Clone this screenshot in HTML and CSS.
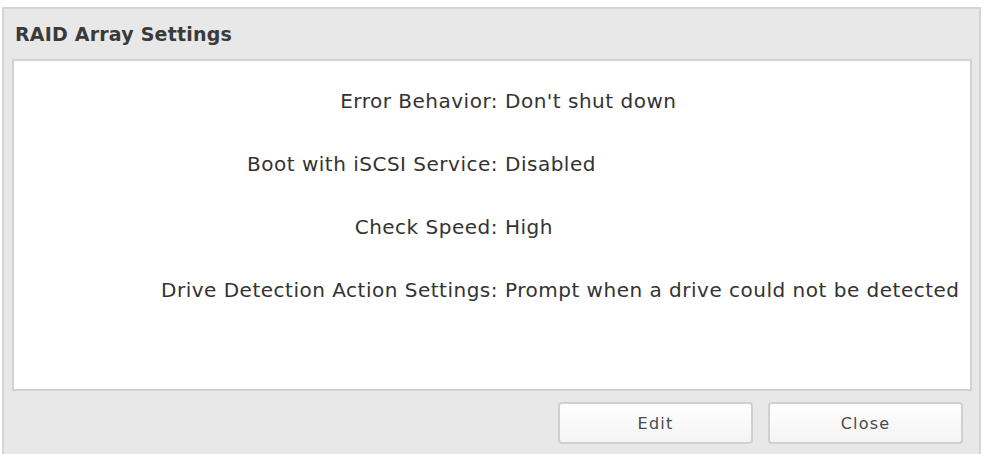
FILE: index.html
```html
<!DOCTYPE html>
<html lang="en">
<head>
    <meta charset="UTF-8">
    <meta name="viewport" content="width=device-width, initial-scale=1.0">
    <title>RAID Array Settings</title>
    <link rel="stylesheet" href="styles.css">
</head>
<body>
    <div class="dialog">
        <h4 class="dialog-title">RAID Array Settings</h4>
        <div class="panel">
            <div class="row">
                <span class="label">Error Behavior:</span>
                <span class="value">Don't shut down</span>
            </div>
            <div class="row">
                <span class="label">Boot with iSCSI Service:</span>
                <span class="value">Disabled</span>
            </div>
            <div class="row">
                <span class="label">Check Speed:</span>
                <span class="value">High</span>
            </div>
            <div class="row">
                <span class="label">Drive Detection Action Settings:</span>
                <span class="value">Prompt when a drive could not be detected</span>
            </div>
        </div>
        <div class="buttons">
            <button class="btn">Edit</button>
            <button class="btn">Close</button>
        </div>
    </div>
</body>
</html>
```

FILE: styles.css
```css
*,
*::before,
*::after {
    box-sizing: border-box;
    padding: 0;
    margin: 0;
}

body {
    background: #ffffff;
    font-family: "DejaVu Sans", sans-serif;
    color: #333;
}

.dialog {
    margin: 7px 3px 0 2px;
    height: 460px;
    background: #e8e8e8;
    border: 2px solid #d4d4d4;
    border-bottom: none;
    padding: 0 7px 0 8px;
}

.dialog-title {
    height: 50px;
    padding: 14px 0 0 3px;
    font-size: 19px;
    font-weight: bold;
    letter-spacing: 0.2px;
    color: #3a3a3a;
}

.panel {
    height: 332px;
    background: #fff;
    border: 2px solid #d2d2d2;
    padding-top: 28px;
}

.row {
    display: flex;
    height: 63px;
    font-size: 20px;
    letter-spacing: 0.5px;
}

.label {
    width: 484px;
    text-align: right;
}

.value {
    margin-left: 7px;
}

.buttons {
    display: flex;
    justify-content: flex-end;
    gap: 15px;
    padding: 11px 9px 0 0;
}

.btn {
    width: 195px;
    height: 42px;
    background: linear-gradient(#ffffff, #f4f4f4);
    border: 2px solid #d0d0d0;
    border-radius: 4px;
    font-family: "DejaVu Sans", sans-serif;
    font-size: 16px;
    letter-spacing: 1.2px;
    color: #4a4a4a;
}
```
